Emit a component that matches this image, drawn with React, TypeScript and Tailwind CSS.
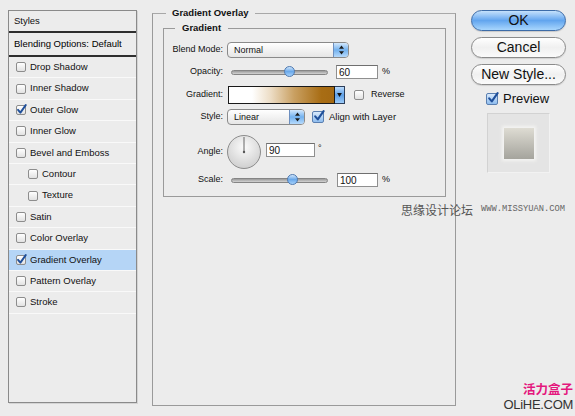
import React from 'react'

const effects = [
  { name: 'Drop Shadow' },
  { name: 'Inner Shadow' },
  { name: 'Outer Glow', on: true },
  { name: 'Inner Glow' },
  { name: 'Bevel and Emboss' },
  { name: 'Contour', sub: true },
  { name: 'Texture', sub: true },
  { name: 'Satin' },
  { name: 'Color Overlay' },
  { name: 'Gradient Overlay', on: true, sel: true },
  { name: 'Pattern Overlay' },
  { name: 'Stroke' },
]

function Tick({ className }: { className: string }) {
  return (
    <svg viewBox="0 0 12 12" className={className}>
      <path d="M2.2 6.4 L4.8 9.4 L10.6 1.2" fill="none" stroke="#1f4f9a" strokeWidth="2.1" strokeLinecap="round" strokeLinejoin="round" />
    </svg>
  )
}

function Box({ on, big }: { on?: boolean; big?: boolean }) {
  return (
    <span
      className={
        'relative block shrink-0 rounded-[2px] border ' +
        (big
          ? 'w-[12px] h-[12px] border-[#5a7fb0] bg-gradient-to-b from-[#d8e9fb] to-[#8fbdee]'
          : 'w-[10px] h-[10px] border-[#8d8d8d] bg-gradient-to-b from-white to-[#e2e2e2]')
      }
    >
      {on && <Tick className={big ? 'absolute left-[0px] top-[-2px] w-[12px] h-[12px]' : 'absolute left-[-1px] top-[-2px] w-[11px] h-[11px]'} />}
    </span>
  )
}

function Select({ text, className }: { text: string; className: string }) {
  return (
    <div className={'flex h-[16px] rounded-[4px] border border-[#8a8a8a] bg-gradient-to-b from-white to-[#e6e6e6] ' + className}>
      <span className="flex-1 pl-[6px] text-[9px] leading-[14px]">{text}</span>
      <span className="w-[15px] rounded-r-[3px] border-l border-[#6d8fbf] bg-gradient-to-b from-[#d3e8fc] via-[#72b1ee] to-[#b6dafc] flex items-center justify-center">
        <svg viewBox="0 0 7 10" className="w-[7px] h-[10px]">
          <path d="M3.5 0.5 L6 3.8 L1 3.8 Z M3.5 9.5 L6 6.2 L1 6.2 Z" fill="#1c1c1c" />
        </svg>
      </span>
    </div>
  )
}

function Slider({ pos }: { pos: number }) {
  return (
    <div className="relative w-[97px] h-[12px] flex items-center">
      <div className="w-full h-[5px] rounded-full border border-[#858585] bg-gradient-to-b from-[#9a9a9a] to-[#d4d4d4]" />
      <div
        className="absolute top-[0px] w-[11px] h-[11px] rounded-full border border-[#4e79b0] bg-gradient-to-b from-[#cfe5fb] via-[#6aa9ea] to-[#a4d0fb]"
        style={{ left: pos }}
      />
    </div>
  )
}

function Field({ value, className }: { value: string; className: string }) {
  return (
    <div className={'h-[14px] border border-[#8f8f8f] border-t-[#6f6f6f] bg-white flex items-center pl-[2px] ' + className}>
      <span className="text-[10px] leading-[11px]">{value}</span>
    </div>
  )
}

export default function App() {
  return (
    <div className="relative w-[575px] h-[416px] overflow-hidden bg-[#ececec] flex items-start text-[#111] font-['Liberation_Sans',Arial,sans-serif]">
      {/* styles list */}
      <div className="ml-[8px] mt-[10px] w-[129px] h-[393px] border border-[#8a8a8a] shadow-[1px_1px_0_#d4d4d4] bg-[#ececec] flex flex-col">
        <div className="h-[22px] border-b-2 border-[#2e2e2e] pl-[5px] flex items-center text-[9.5px]">Styles</div>
        <div className="h-[24px] border-b-2 border-[#2e2e2e] pl-[5px] flex items-center text-[9.5px] text-black">Blending Options: Default</div>
        {effects.map(e => (
          <div
            key={e.name}
            className={
              'h-[21.4px] shrink-0 border-b border-[#f9f9f9] flex items-center gap-[4px] text-[9.5px] ' +
              (e.sub ? 'pl-[19px] ' : 'pl-[7px] ') +
              (e.sel ? 'bg-[#b5d5f6]' : '')
            }
          >
            <Box on={e.on} />
            <span>{e.name}</span>
          </div>
        ))}
      </div>

      {/* gradient overlay settings */}
      <fieldset className="ml-[15px] mt-[7px] w-[304px] h-[399px] border border-[#9a9a9a] border-t-[#a8a8a8]">
        <legend className="ml-[13px] px-[6px] text-[9.5px] leading-[12px] font-bold">Gradient Overlay</legend>
        <fieldset className="mt-[3px] ml-[10px] mr-[9px] border border-[#9a9a9a] pt-[5px] pb-[6px]">
          <legend className="ml-[11px] px-[7px] text-[9.5px] leading-[12px] font-bold">Gradient</legend>

          <div className="h-[22px] flex items-center text-[9px]">
            <span className="w-[59px] text-right">Blend Mode:</span>
            <Select text="Normal" className="ml-[4px] w-[122px]" />
          </div>

          <div className="h-[22px] flex items-center text-[9px]">
            <span className="w-[59px] text-right">Opacity:</span>
            <div className="ml-[8px]"><Slider pos={53} /></div>
            <Field value="60" className="ml-[8px] w-[42px]" />
            <span className="ml-[4px]">%</span>
          </div>

          <div className="h-[23px] flex items-center text-[9px]">
            <span className="w-[59px] text-right">Gradient:</span>
            <div className="ml-[5px] h-[18px] w-[107px] border border-[#1a1a1a] bg-[linear-gradient(to_right,#ffffff_22%,#ecdcc4_40%,#c9a062_62%,#a86d14_88%,#a46912)]" />
            <div className="h-[18px] w-[10px] border border-l-0 border-[#2c3e5a] bg-gradient-to-b from-[#bcdcfb] via-[#5d9fe6] to-[#9ccbf8] flex items-center justify-center">
              <svg viewBox="0 0 6 5" className="w-[5px] h-[4px]"><path d="M0 0 H6 L3 5 Z" fill="#111" /></svg>
            </div>
            <span className="ml-[9px]"><Box /></span>
            <span className="ml-[7px]">Reverse</span>
          </div>

          <div className="h-[22px] flex items-center text-[9px]">
            <span className="w-[59px] text-right">Style:</span>
            <Select text="Linear" className="ml-[4px] w-[78px]" />
            <span className="ml-[7px] flex"><Box on big /></span>
            <span className="ml-[5px] text-[9.5px]">Align with Layer</span>
          </div>

          <div className="mt-[6px] h-[36px] flex items-center text-[9px]">
            <span className="w-[59px] text-right">Angle:</span>
            <svg viewBox="0 0 36 36" className="ml-[3px] w-[36px] h-[36px]">
              <defs>
                <radialGradient id="dial" cx="50%" cy="35%" r="65%">
                  <stop offset="0" stopColor="#fbfbfb" />
                  <stop offset="1" stopColor="#cfcfcf" />
                </radialGradient>
              </defs>
              <circle cx="18" cy="18" r="16.5" fill="url(#dial)" stroke="#8c8c8c" strokeWidth="1" />
              <line x1="18" y1="18" x2="18" y2="3" stroke="#666" strokeWidth="1" />
              <circle cx="18" cy="18" r="1.2" fill="#555" />
            </svg>
            <Field value="90" className="ml-[4px] w-[49px] self-start mt-[9px]" />
            <span className="ml-[3px] self-start mt-[8px]">°</span>
          </div>

          <div className="h-[20px] flex items-center text-[9px]">
            <span className="w-[59px] text-right">Scale:</span>
            <div className="ml-[8px]"><Slider pos={56} /></div>
            <Field value="100" className="ml-[9px] w-[41px]" />
            <span className="ml-[4px]">%</span>
          </div>
        </fieldset>
      </fieldset>

      {/* buttons */}
      <div className="ml-[15px] mt-[10px] w-[95px] flex flex-col">
        <div className="flex flex-col gap-[6px]">
          <button className="h-[21px] rounded-full border border-[#3d6ca8] bg-gradient-to-b from-[#c5e1fb] via-[#62a5ee] to-[#a8d6fd] text-[14px] leading-[19px] shadow-[0_1px_1px_rgba(0,0,0,0.15)]">OK</button>
          <button className="h-[21px] rounded-full border border-[#8b8b8b] bg-gradient-to-b from-white via-[#f0f0f0] to-[#fbfbfb] text-[14px] leading-[19px] shadow-[0_1px_1px_rgba(0,0,0,0.12)]">Cancel</button>
          <button className="h-[21px] rounded-full border border-[#8b8b8b] bg-gradient-to-b from-white via-[#f0f0f0] to-[#fbfbfb] text-[14px] leading-[19px] shadow-[0_1px_1px_rgba(0,0,0,0.12)]">New Style...</button>
        </div>
        <div className="mt-[7px] ml-[15px] h-[13px] flex items-center">
          <Box on big />
          <span className="ml-[5px] text-[13px] leading-[13px]">Preview</span>
        </div>
        <div className="mt-[8px] ml-[16px] w-[63px] h-[60px] bg-[#e4e4e4] border border-[#d2d2d2] border-b-[#f2f2f2] border-r-[#f2f2f2] flex items-center justify-center">
          <div className="w-[30px] h-[31px] bg-gradient-to-b from-[#dedcd3] to-[#a5a49d] shadow-[0_0_3px_2px_#f4f4f2]" />
        </div>
      </div>

      {/* watermarks */}
      <div className="absolute left-[401px] top-[202px] flex items-center gap-[8px]">
        <span className="text-[12px] leading-[15px] text-[#555] font-['Noto_Sans_CJK_SC',sans-serif]">思缘设计论坛</span>
        <span className="text-[8.75px] text-[#666] font-['Liberation_Mono',monospace]">WWW.MISSYUAN.COM</span>
      </div>
      <div className="absolute right-[2px] top-[381px] flex flex-col items-end">
        <span className="text-[12.5px] leading-[15px] font-bold text-[#e4177d] font-['Noto_Sans_CJK_SC',sans-serif]">活力盒子</span>
        <span className="mt-[2px] text-[13px] leading-[13px] text-[#333] tracking-[-0.3px]">OLiHE.COM</span>
      </div>
    </div>
  )
}
